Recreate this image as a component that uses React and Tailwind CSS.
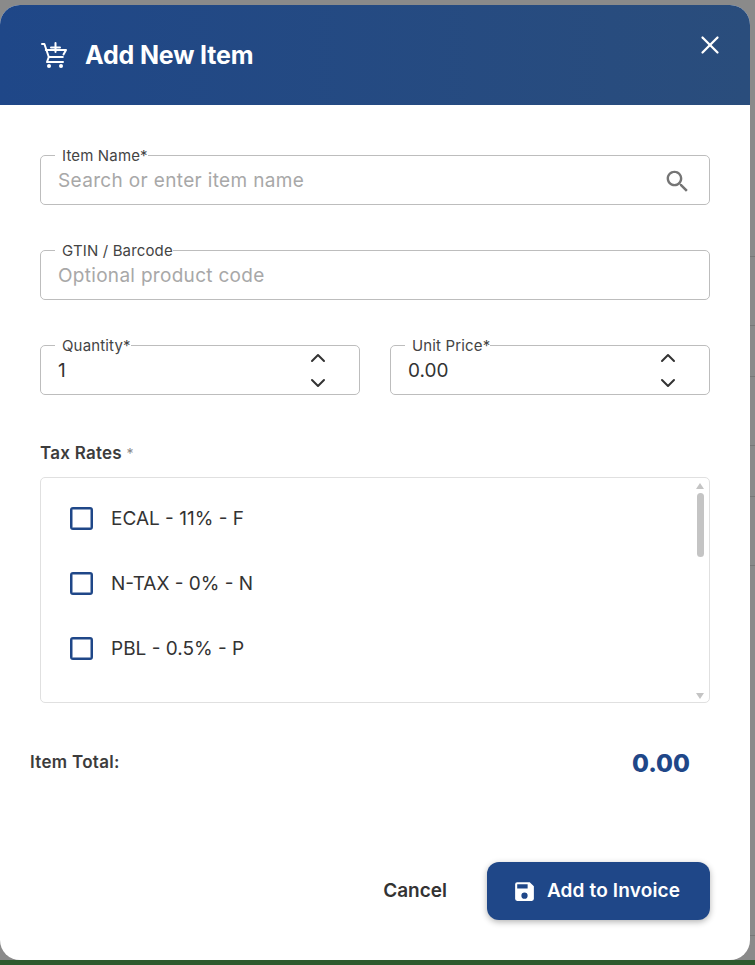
import React from "react";
import { X, ChevronUp, ChevronDown } from "lucide-react";

const taxRates = ["ECAL - 11% - F", "N-TAX - 0% - N", "PBL - 0.5% - P"];

function CartPlus() {
  return (
    <svg width="26" height="26" viewBox="0 0 26 26" fill="none" stroke="white" strokeWidth="2" strokeLinecap="round" strokeLinejoin="round">
      <path d="M1 2h2.4l4.4 13h14" />
      <path d="M4.8 8h20.2l-2.5 4.5" />
      <path d="M7.8 15 6 20h16" />
      <path d="M14.5 1v9M10 5.5h9" />
      <circle cx="8" cy="24" r="2" fill="white" stroke="none" />
      <circle cx="20" cy="24" r="2" fill="white" stroke="none" />
    </svg>
  );
}

function SearchIcon() {
  return (
    <svg width="29" height="29" viewBox="0 0 24 24" fill="#757575">
      <path d="M15.5 14h-.79l-.28-.27C15.41 12.59 16 11.11 16 9.5 16 5.91 13.09 3 9.5 3S3 5.91 3 9.5 5.91 16 9.5 16c1.61 0 3.09-.59 4.23-1.57l.27.28v.79l5 4.99L20.49 19l-4.99-5zm-6 0C7.01 14 5 11.99 5 9.5S7.01 5 9.5 5 14 7.01 14 9.5 11.99 14 9.5 14z" />
    </svg>
  );
}

function SaveIcon() {
  return (
    <svg width="25" height="25" viewBox="0 0 24 24" fill="white">
      <path d="M17 3H5a2 2 0 0 0-2 2v14a2 2 0 0 0 2 2h14a2 2 0 0 0 2-2V7l-4-4zm-5 16a3 3 0 1 1 0-6 3 3 0 0 1 0 6zm3-10H5V5h10v4z" />
    </svg>
  );
}

function Field({ label, className = "", children }) {
  return (
    <fieldset className={`h-[59px] border border-[#bdbdbd] rounded-[5px] pl-[17px] ${className}`}>
      <legend className="-ml-[3px] pl-[7px] text-[15px] tracking-[0.15px] leading-[18px] text-[#444]">
        <span className="block translate-y-px">{label}</span>
      </legend>
      <div className="h-[40px] -mt-[3px] flex items-center justify-between">{children}</div>
    </fieldset>
  );
}

function Stepper() {
  return (
    <div className="flex flex-col gap-[1px] -mt-[2px] text-[#333]">
      <ChevronUp size={24} strokeWidth={2} />
      <ChevronDown size={24} strokeWidth={2} />
    </div>
  );
}

export default function App() {
  return (
    <div className="h-[965px] w-[755px] overflow-hidden bg-[#8a8a8a] pt-[5px] flex flex-col font-['Inter',sans-serif]">
      <div className="flex h-[955px] shrink-0">
        <div className="w-[750px] shrink-0 bg-white rounded-[20px] overflow-hidden flex flex-col">
          <header className="h-[100px] shrink-0 bg-gradient-to-r from-[#1f4788] to-[#2a4d7c] flex items-center justify-between pl-[41px] pr-[25px]">
            <div className="flex items-center gap-[18px]">
              <CartPlus />
              <h2 className="text-white text-[25px] font-bold tracking-[-0.15px] pt-[1px]">Add New Item</h2>
            </div>
            <X size={30} color="white" strokeWidth={1.8} className="-mt-[20px]" />
          </header>

          <div className="flex-1 flex flex-col px-[40px] pt-[41px]">
            <Field label="Item Name*" className="pr-[17px]">
              <span className="text-[19px] tracking-[0.35px] text-[#a8a8a8]">Search or enter item name</span>
              <SearchIcon />
            </Field>

            <Field label="GTIN / Barcode" className="mt-[36px] pr-[17px]">
              <span className="text-[19px] tracking-[0.3px] text-[#a8a8a8]">Optional product code</span>
            </Field>

            <div className="grid grid-cols-2 gap-[30px] mt-[36px]">
              <Field label="Quantity*" className="pr-[29px]">
                <span className="text-[19px] text-[#333]">1</span>
                <Stepper />
              </Field>
              <Field label="Unit Price*" className="pr-[29px]">
                <span className="text-[19px] text-[#333]">0.00</span>
                <Stepper />
              </Field>
            </div>

            <label className="mt-[48px] text-[17px] tracking-[0.25px] font-semibold leading-[20px] text-[#3c3c3c]">
              Tax Rates <span className="font-normal text-[#888] text-[14px]">*</span>
            </label>

            <div className="mt-[13px] h-[226px] border border-[#e0e0e0] rounded-[5px] flex">
              <ul className="flex-1 pt-[9px] pl-[29px]">
                {taxRates.map((t) => (
                  <li key={t} className="h-[65px] flex items-center gap-[18px]">
                    <span className="w-[23px] h-[23px] -mt-[2px] border-2 border-[#1f4788] rounded-[3px] shadow-[inset_0_0_0_0.5px_#1f4788]" />
                    <span className="text-[19px] text-[#333]">{t}</span>
                  </li>
                ))}
              </ul>
              <div className="w-[14px] mr-[2px] flex flex-col items-center pt-[5px] pb-[3px]">
                <div className="w-0 h-0 border-x-[4px] border-x-transparent border-b-[6px] border-b-[#c4c4c4]" />
                <div className="mt-[4px] w-[7px] h-[64px] rounded-full bg-[#c4c4c4]" />
                <div className="flex-1" />
                <div className="w-0 h-0 border-x-[4px] border-x-transparent border-t-[6px] border-t-[#c4c4c4]" />
              </div>
            </div>

            <div className="h-[36px] mt-[42px] -ml-[10px] pr-[20px] flex items-center justify-between">
              <span className="text-[17px] tracking-[0.3px] font-semibold text-[#3c3c3c]">Item Total:</span>
              <span className="text-[24.5px] font-extrabold text-[#1f4788]">0.00</span>
            </div>

            <div className="mt-[81px] flex items-center justify-end">
              <button className="text-[19px] font-semibold text-[#333] mr-[40px]">Cancel</button>
              <button className="w-[223px] h-[58px] pr-[5px] rounded-[12px] bg-[#1f4788] text-white text-[19px] tracking-[0.15px] font-semibold flex items-center justify-center gap-[10px] shadow-[0_2px_6px_rgba(0,0,0,0.3)]">
                <SaveIcon />
                Add to Invoice
              </button>
            </div>
          </div>
        </div>

        {/* table rows of the page behind the dialog */}
        <div className="flex-1 flex flex-col">
          <div className="h-[252px] border-b border-[#777]" />
          <div className="h-[69px] border-b border-[#777]" />
          <div className="h-[51px] border-b border-[#777]" />
          <div className="h-[69px] border-b border-[#777]" />
          <div className="h-[51px] border-b border-[#777]" />
          <div className="h-[69px] border-b border-[#777]" />
          <div className="h-[370px] border-b border-[#777]" />
        </div>
      </div>
      <div className="flex-1 bg-[#2e5a2e]" />
    </div>
  );
}
